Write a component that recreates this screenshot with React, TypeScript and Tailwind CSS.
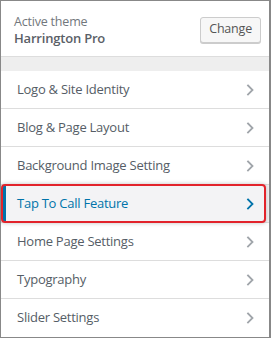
import React from 'react';

const items = [
  'Logo & Site Identity',
  'Blog & Page Layout',
  'Background Image Setting',
  'Tap To Call Feature',
  'Home Page Settings',
  'Typography',
  'Slider Settings',
];

function Chevron({ active }: { active?: boolean }) {
  return (
    <svg width="10" height="14" viewBox="0 0 10 14" fill="none">
      <path
        d="M3 2.5 L7.5 7 L3 11.5"
        stroke={active ? '#0073aa' : '#a0a5aa'}
        strokeWidth="1.8"
        strokeLinecap="square"
      />
    </svg>
  );
}

export default function App() {
  return (
    <div
      className="w-[271px] h-[338px] bg-white border-l border-t border-b border-r-2 border-[#888] overflow-hidden"
      style={{ fontFamily: '"Open Sans", "Noto Sans", sans-serif' }}
    >
      <div className="h-[56px] flex items-center justify-between pl-[13px] pr-[8px] border-b border-[#ddd]">
        <div className="flex flex-col leading-[17px] pt-[3px] tracking-[-0.2px]">
          <span className="text-[12.5px] text-[#72777c]">Active theme</span>
          <span className="text-[13px] font-semibold text-[#5a6067]">Harrington Pro</span>
        </div>
        <button className="h-[26px] px-[8px] mt-[2px] bg-[#f7f7f7] border border-[#ccc] rounded-[3px] text-[12.5px] tracking-[-0.2px] text-[#555] shadow-[0_1px_0_#ccc]">
          Change
        </button>
      </div>
      <div className="h-[14px] bg-[#eee]" />
      <div className="flex flex-col">
        {items.map((label) => {
          const active = label === 'Tap To Call Feature';
          if (active) {
            return (
              <div key={label} className="h-[38px] relative border-b border-[#ddd] bg-[#f3f3f5]">
                <div className="absolute left-0 right-[3px] top-[-1px] bottom-[-1px] border-2 border-[#e2232b] rounded-[4px] shadow-[0_0_4px_rgba(0,0,0,0.25)] z-10" />
                <div className="h-full flex items-center justify-between pl-[11px] pr-[14px] border-l-[3px] border-[#0073aa] ml-[2px]">
                  <span className="text-[13px] tracking-[-0.25px] text-[#0073aa]">{label}</span>
                  <Chevron active />
                </div>
              </div>
            );
          }
          return (
            <div
              key={label}
              className="h-[38px] flex items-center justify-between pl-[16px] pr-[14px] border-b border-[#ddd] last:border-b-0"
            >
              <span className="text-[13px] tracking-[-0.25px] text-[#555d66]">{label}</span>
              <Chevron />
            </div>
          );
        })}
      </div>
    </div>
  );
}
